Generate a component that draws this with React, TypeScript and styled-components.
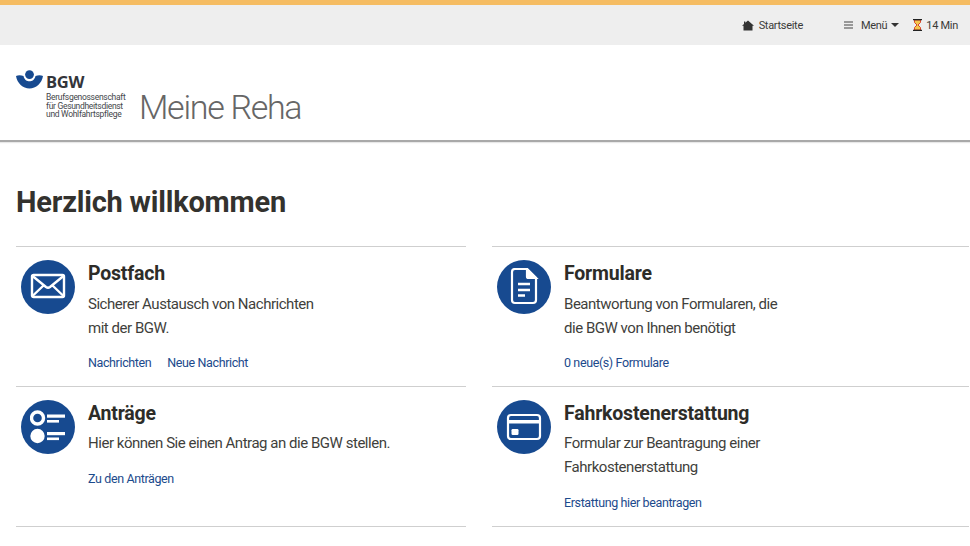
import React from "react";
import styled, { createGlobalStyle } from "styled-components";

const Global = createGlobalStyle`
  html, body { margin: 0; padding: 0; background: #fff; overflow: hidden; }
  body { font-family: Roboto, "Noto Sans", sans-serif; color: #3a3a38; }
`;
const Page = styled.div`width: 970px; height: 546px; overflow: hidden; display: flex; flex-direction: column;`;
const TopBar = styled.nav`
  height: 40px; border-top: 5px solid #f5bc62; background: #eeeeee;
  display: flex; align-items: center; justify-content: flex-end; padding: 0 12px 0 0;
  font-size: 11px; color: #3a3a38; letter-spacing: -0.3px;
`;
const NavItem = styled.span<{ $ml?: number; $gap?: number }>`
  display: inline-flex; align-items: center; gap: ${p => p.$gap ?? 5}px; margin-left: ${p => p.$ml ?? 0}px;
`;
const MenuLabel = styled.span`margin-left: 3px; margin-right: -1px;`;
const Caret = styled.i`
  display: inline-block; border-left: 4px solid transparent; border-right: 4px solid transparent; border-top: 4px solid #333;
`;
const Header = styled.header`
  height: 95px; border-bottom: 2px solid #a9a9a9; box-sizing: content-box;
  display: flex; align-items: flex-start; padding-left: 16px;
  box-shadow: 0 1px 1px #e8e8e8;
`;
const Logo = styled.div`display: flex; padding-top: 25px; width: 123px; gap: 3px;`;
const LogoText = styled.div`display: flex; flex-direction: column; padding-top: 3px;`;
const LogoName = styled.b`font-size: 16.5px; line-height: 18px; margin-bottom: 2px; color: #33353a; font-weight: 700; font-family: "Open Sans", sans-serif; letter-spacing: -0.3px;`;
const LogoSub = styled.span`font-size: 8.5px; line-height: 8.7px; color: #44464a; white-space: nowrap; letter-spacing: -0.3px;`;
const Title = styled.h1`
  margin: 40px 0 0; font-size: 34px; line-height: 44px; font-weight: 300; color: #666; letter-spacing: -1.3px;
`;
const Main = styled.main`padding: 42px 1px 0 16px;`;
const Heading = styled.h2`margin: 0 0 26px; font-size: 29px; line-height: 36px; font-weight: 700; color: #33322e; letter-spacing: -0.2px;`;
const Grid = styled.div`display: grid; grid-template-columns: 450px 477px; column-gap: 26px;`;
const Card = styled.article`
  height: 140px; box-sizing: border-box; border-top: 1px solid #cfcfcf; padding: 13px 0 0 5px;
  display: flex; gap: 13px;
`;
const LastLine = styled.div`border-top: 1px solid #cfcfcf; height: 1px;`;
const IconCircle = styled.div`
  width: 54px; height: 54px; border-radius: 50%; background: #174a90; flex: none;
  display: flex; align-items: center; justify-content: center;
`;
const Body = styled.div`display: flex; flex-direction: column; padding-top: 1px;`;
const CardTitle = styled.h3`margin: 0; font-size: 19.5px; line-height: 26px; font-weight: 700; color: #2d2c28; letter-spacing: -0.2px;`;
const Text = styled.p<{ $mt: number }>`margin: ${p => p.$mt}px 0 0; font-size: 15px; line-height: 24px; color: #3f3f3c; letter-spacing: -0.47px;`;
const Links = styled.div<{ $mt: number }>`display: flex; gap: 16px; margin-top: ${p => p.$mt}px; font-size: 12.5px; line-height: 20px; color: #1c4a8c; letter-spacing: -0.38px;`;

const Mail = () => (
  <svg width="36" height="28" viewBox="0 0 36 28" fill="none" stroke="#fff" strokeWidth="2.4">
    <rect x="2" y="2" width="32" height="22" rx="1.5" />
    <path d="M2.5 3 L16 14 Q18 15.5 20 14 L33.5 3 M2.5 23 L13.5 12.5 M33.5 23 L22.5 12.5" />
  </svg>
);
const Doc = () => (
  <svg width="30" height="38" viewBox="0 0 30 38" fill="none" stroke="#fff" strokeWidth="2.2">
    <path d="M18 1 H6 Q3 1 3 4 V32 Q3 35 6 35 H24 Q27 35 27 32 V10 Z" />
    <path d="M18 1 L27 10 H19.5 Q18 10 18 8.5 Z" fill="#fff" />
    <path d="M9 16 H21 M9 22 H21 M9 27.5 H16" strokeWidth="2.4" />
  </svg>
);
const ListIcon = () => (
  <svg width="36" height="36" viewBox="0 0 36 36" fill="#fff">
    <circle cx="7.5" cy="9" r="6" fill="none" stroke="#fff" strokeWidth="3.4" />
    <circle cx="7.5" cy="27" r="7.2" />
    <rect x="17" y="5.5" width="18" height="3.2" />
    <rect x="17" y="11" width="12" height="2.6" />
    <rect x="17" y="23" width="18" height="3.2" />
    <rect x="17" y="28.5" width="12" height="2.6" />
  </svg>
);
const CardIcon = () => (
  <svg width="36" height="28" viewBox="0 0 36 28" fill="none" stroke="#fff" strokeWidth="2.2">
    <rect x="2" y="2" width="32" height="24" rx="3" />
    <rect x="2" y="7" width="32" height="3.5" fill="#fff" stroke="none" />
    <rect x="5.5" y="16" width="7" height="6" rx="1.2" fill="#fff" stroke="none" />
  </svg>
);
const House = () => (
  <svg width="12" height="11" viewBox="0 0 12 11" fill="#333">
    <path d="M6 0.5 L12 5.8 L10.5 5.8 V10.5 H1.5 V5.8 H0 L2 4 V1.5 H3.3 V2.8 Z" />
  </svg>
);
const Burger = () => (
  <svg width="9" height="8" viewBox="0 0 9 8" stroke="#444" strokeWidth="1">
    <path d="M0 1 H9 M0 4 H9 M0 7 H9" />
  </svg>
);
const Hourglass = () => (
  <svg width="9" height="12" viewBox="0 0 9 12">
    <path d="M1.5 1 H7.5 V3.5 L5 6 L7.5 8.5 V11 H1.5 V8.5 L4 6 L1.5 3.5 Z" fill="#f3c64d" stroke="#d9472a" strokeWidth="1" />
    <path d="M0 0.6 H9 M0 11.4 H9" stroke="#222" strokeWidth="1.2" />
  </svg>
);
const Emblem = () => (
  <svg width="27" height="19" viewBox="0 0 27 19" fill="#174a90">
    <circle cx="13.5" cy="4.6" r="4.4" />
    <path d="M0 6 C2 5 5 5 7.5 6 C8.5 10 11 11.3 13.5 11.3 C16 11.3 18.5 10 19.5 6 C22 5 25 5 27 6 C26 13 20 18.6 13.5 18.6 C7 18.6 1 13 0 6 Z" />
  </svg>
);

export default function App() {
  return (
    <Page>
      <Global />
      <TopBar>
        <NavItem><House />Startseite</NavItem>
        <NavItem $ml={41}><Burger /><MenuLabel>Menü</MenuLabel><Caret /></NavItem>
        <NavItem $ml={14} $gap={4}><Hourglass />14 Min</NavItem>
      </TopBar>
      <Header>
        <Logo>
          <Emblem />
          <LogoText>
            <LogoName>BGW</LogoName>
            <LogoSub>Berufsgenossenschaft</LogoSub>
            <LogoSub>für Gesundheitsdienst</LogoSub>
            <LogoSub>und Wohlfahrtspflege</LogoSub>
          </LogoText>
        </Logo>
        <Title>Meine Reha</Title>
      </Header>
      <Main>
        <Heading>Herzlich willkommen</Heading>
        <Grid>
          <Card>
            <IconCircle><Mail /></IconCircle>
            <Body>
              <CardTitle>Postfach</CardTitle>
              <Text $mt={5}>Sicherer Austausch von Nachrichten<br />mit der BGW.</Text>
              <Links $mt={13}><span>Nachrichten</span><span>Neue Nachricht</span></Links>
            </Body>
          </Card>
          <Card>
            <IconCircle><Doc /></IconCircle>
            <Body>
              <CardTitle>Formulare</CardTitle>
              <Text $mt={5}>Beantwortung von Formularen, die<br />die BGW von Ihnen benötigt</Text>
              <Links $mt={13}><span>0 neue(s) Formulare</span></Links>
            </Body>
          </Card>
          <Card>
            <IconCircle><ListIcon /></IconCircle>
            <Body>
              <CardTitle>Anträge</CardTitle>
              <Text $mt={4}>Hier können Sie einen Antrag an die BGW stellen.</Text>
              <Links $mt={14}><span>Zu den Anträgen</span></Links>
            </Body>
          </Card>
          <Card>
            <IconCircle><CardIcon /></IconCircle>
            <Body>
              <CardTitle>Fahrkostenerstattung</CardTitle>
              <Text $mt={4}>Formular zur Beantragung einer<br />Fahrkostenerstattung</Text>
              <Links $mt={14}><span>Erstattung hier beantragen</span></Links>
            </Body>
          </Card>
          <LastLine />
          <LastLine />
        </Grid>
      </Main>
    </Page>
  );
}
